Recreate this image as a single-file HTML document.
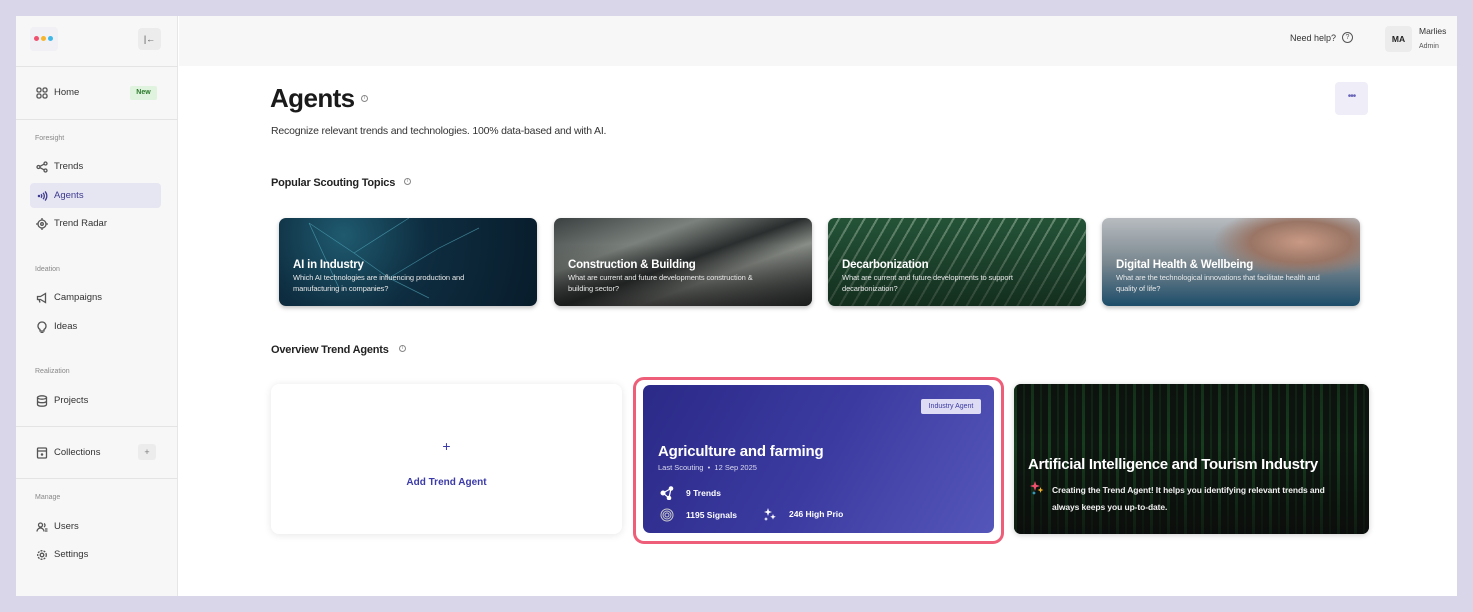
<!DOCTYPE html>
<html><head><meta charset="utf-8"><style>
*{box-sizing:border-box;margin:0;padding:0}
body{width:1473px;height:612px;background:#d9d6ea;font-family:"Liberation Sans",sans-serif;color:#222;position:relative;overflow:hidden}
.a{position:absolute}
.frame{left:16px;top:16px;width:1441px;height:580px;background:#fff;overflow:hidden}
.side{left:0;top:0;width:162px;height:580px;background:#f7f7f7;border-right:1px solid #e6e6e6}
.hr{position:absolute;left:0;width:162px;height:1px;background:#e4e4e4}
.nav{position:absolute;left:14px;width:131px;height:25px;font-size:9.5px;color:#333;display:flex;align-items:center;padding-left:6px;border-radius:4px}
.nav svg{width:12px;height:12px;margin-right:6px;stroke:#555;fill:none;stroke-width:1.3}
.sec{position:absolute;left:19px;font-size:7px;color:#888}
.top{left:163px;top:0;width:1278px;height:50px;background:#f7f7f7}
.info{position:absolute;width:7px;height:7px;border:1px solid #888;border-radius:50%;font-size:5px;line-height:5px;text-align:center;color:#888}
.card{position:absolute;top:202px;width:258px;height:88px;border-radius:7px;overflow:hidden;box-shadow:0 2px 4px rgba(0,0,0,.25);color:#fff}
.card h4{position:absolute;left:14px;top:41px;font-size:11.5px;font-weight:bold;letter-spacing:-.2px}
.card p{position:absolute;left:14px;top:55px;width:210px;font-size:7.5px;line-height:10.5px;color:#e8e8e8;letter-spacing:-.1px}
.st{font-size:8.5px;font-weight:bold;color:#fff;display:flex;align-items:center}
</style></head><body>
<div class="a frame">
 <div class="a side">
  <div class="a" style="left:14px;top:11px;width:28px;height:24px;background:#f0f0f5;border-radius:4px"></div>
  <div class="a" style="left:18px;top:20px;width:5px;height:5px;border-radius:50%;background:#f0506e"></div>
  <div class="a" style="left:25px;top:20px;width:5px;height:5px;border-radius:50%;background:#f7b52c"></div>
  <div class="a" style="left:32px;top:20px;width:5px;height:5px;border-radius:50%;background:#3fb8e8"></div>
  <div class="a" style="left:122px;top:12px;width:23px;height:22px;background:#ececec;border-radius:4px;font-size:9px;color:#555;text-align:center;line-height:22px">|←</div>
  <div class="hr" style="top:50px"></div>
  <div class="nav" style="top:64px"><svg viewBox="0 0 12 12"><rect x="1" y="1" width="4" height="4" rx="1.5"/><rect x="7" y="1" width="4" height="4" rx="1.5"/><rect x="1" y="7" width="4" height="4" rx="1.5"/><rect x="7" y="7" width="4" height="4" rx="1.5"/></svg>Home</div>
  <div class="a" style="left:114px;top:70px;width:27px;height:14px;background:#e0f3df;color:#2a7a2a;font-size:7px;font-weight:bold;text-align:center;line-height:14px;border-radius:2px">New</div>
  <div class="hr" style="top:103px"></div>
  <div class="sec" style="top:119px">Foresight</div>
  <div class="nav" style="top:138px"><svg viewBox="0 0 12 12"><circle cx="2.5" cy="6" r="1.5"/><circle cx="9.5" cy="2.5" r="1.5"/><circle cx="9.5" cy="9.5" r="1.5"/><path d="M4 5.3L8 3.2M4 6.7L8 8.8"/></svg>Trends</div>
  <div class="nav" style="top:167px;background:#e6e5f2;color:#3c3a8f"><svg viewBox="0 0 12 12" style="stroke:#3c3a8f"><circle cx="3" cy="6" r=".6"/><path d="M5 4.2a2.5 2.5 0 010 3.6M7 2.8a4.5 4.5 0 010 6.4M9 1.5a6.5 6.5 0 010 9"/></svg>Agents</div>
  <div class="nav" style="top:195px"><svg viewBox="0 0 12 12"><circle cx="6" cy="6" r="4"/><circle cx="6" cy="6" r="1.3"/><path d="M6 0v2M6 10v2M0 6h2M10 6h2"/></svg>Trend Radar</div>
  <div class="sec" style="top:250px">Ideation</div>
  <div class="nav" style="top:269px"><svg viewBox="0 0 12 12"><path d="M1.5 4.5h3l5-3v9l-5-3h-3z M3 7.5l1 3"/></svg>Campaigns</div>
  <div class="nav" style="top:298px"><svg viewBox="0 0 12 12"><path d="M4 8.5a4 4 0 114 0v1.5h-4z M4.5 11.5h3"/></svg>Ideas</div>
  <div class="sec" style="top:352px">Realization</div>
  <div class="nav" style="top:372px"><svg viewBox="0 0 12 12"><ellipse cx="6" cy="2.5" rx="4.5" ry="1.7"/><path d="M1.5 2.5v7c0 1 2 1.7 4.5 1.7s4.5-.7 4.5-1.7v-7M1.5 6c0 1 2 1.7 4.5 1.7S10.5 7 10.5 6"/></svg>Projects</div>
  <div class="hr" style="top:410px"></div>
  <div class="nav" style="top:424px"><svg viewBox="0 0 12 12"><rect x="1.5" y="1" width="9" height="10" rx="1"/><path d="M1.5 4h9"/><circle cx="6" cy="7.5" r=".6"/></svg>Collections</div>
  <div class="a" style="left:122px;top:428px;width:18px;height:16px;background:#ececec;border-radius:3px;font-size:9px;color:#777;text-align:center;line-height:16px">+</div>
  <div class="hr" style="top:462px"></div>
  <div class="sec" style="top:478px">Manage</div>
  <div class="nav" style="top:498px"><svg viewBox="0 0 12 12"><circle cx="4.5" cy="4" r="2"/><path d="M1 10.5a3.5 3.5 0 017 0M8 2.5a2 2 0 010 3.5M9 8h2.5M9 10h2.5"/></svg>Users</div>
  <div class="nav" style="top:526px"><svg viewBox="0 0 12 12"><circle cx="6" cy="6" r="1.8"/><circle cx="6" cy="6" r="4.3" stroke-dasharray="2 1.1"/></svg>Settings</div>
 </div>
 <div class="a top">
  <div class="a" style="left:1111px;top:17px;font-size:9px;color:#333">Need help?</div>
  <div class="a" style="left:1163px;top:16px;width:11px;height:11px;border:1px solid #555;border-radius:50%;font-size:7px;text-align:center;line-height:9px;color:#555">?</div>
  <div class="a" style="left:1206px;top:10px;width:27px;height:26px;background:#ececec;border-radius:4px;font-size:8.5px;font-weight:bold;text-align:center;line-height:26px">MA</div>
  <div class="a" style="left:1240px;top:10px;font-size:8.5px;color:#333">Marlies</div>
  <div class="a" style="left:1240px;top:27px;font-size:7px;color:#555">Admin</div>
 </div>
 <div class="a" style="left:254px;top:67px;font-size:26px;font-weight:bold;letter-spacing:-.6px;color:#1a1a1a">Agents</div>
 <div class="info" style="left:345px;top:79px">i</div>
 <div class="a" style="left:255px;top:109px;font-size:10.5px;letter-spacing:-.2px;color:#333">Recognize relevant trends and technologies. 100% data-based and with AI.</div>
 <div class="a" style="left:1319px;top:66px;width:33px;height:33px;background:#efeef8;border-radius:4px;text-align:center;line-height:30px;color:#6a65b8;font-size:10px;letter-spacing:-1px">•••</div>
 <div class="a" style="left:255px;top:161px;font-size:11px;font-weight:bold;letter-spacing:-.2px">Popular Scouting Topics</div>
 <div class="info" style="left:388px;top:162px">i</div>
 <div class="card" style="left:263px;background:radial-gradient(circle at 25% 20%,#1f5a6f 0,#0e2d40 40%,#081c2b 100%)">
  <svg class="a" width="258" height="88" style="left:0;top:0;opacity:.6"><path d="M30 5L75 35L130 0M75 35L110 60L160 30L200 10M30 5L60 70M110 60L150 80" stroke="#5ab6c9" stroke-width=".7" fill="none"/></svg>
  <h4>AI in Industry</h4><p>Which AI technologies are influencing production and manufacturing in companies?</p></div>
 <div class="card" style="left:538px;background:linear-gradient(160deg,#3a4040 0,#7b817c 30%,#2a2e2e 50%,#8a8e88 65%,#2d3131 100%)">
  <div class="a" style="left:0;top:0;width:258px;height:88px;background:linear-gradient(0deg,rgba(20,20,20,.7),rgba(0,0,0,0) 70%)"></div>
  <h4>Construction &amp; Building</h4><p>What are current and future developments construction &amp; building sector?</p></div>
 <div class="card" style="left:812px;background:repeating-linear-gradient(120deg,#2f6d4a 0 9px,#8fbb9c 9px 11px)">
  <div class="a" style="left:0;top:0;width:258px;height:88px;background:linear-gradient(0deg,rgba(10,25,15,.75),rgba(10,25,15,.3))"></div>
  <h4>Decarbonization</h4><p>What are current and future developments to support decarbonization?</p></div>
 <div class="card" style="left:1086px;background:linear-gradient(180deg,#b8bcc0 0,#7b8890 50%,#1d4d6a 100%)">
  <div class="a" style="left:110px;top:0;width:148px;height:60px;background:radial-gradient(ellipse at 60% 40%,#c99a85 0,#9a7565 40%,rgba(0,0,0,0) 70%)"></div>
  <h4>Digital Health &amp; Wellbeing</h4><p>What are the technological innovations that facilitate health and quality of life?</p></div>
 <div class="a" style="left:255px;top:328px;font-size:11px;font-weight:bold;letter-spacing:-.2px">Overview Trend Agents</div>
 <div class="info" style="left:383px;top:329px">i</div>
 <div class="a" style="left:255px;top:368px;width:351px;height:150px;background:#fff;border-radius:8px;box-shadow:0 1px 8px rgba(0,0,0,.1)">
  <div class="a" style="left:0;top:54px;width:351px;text-align:center;font-size:14px;color:#3b3aa8">+</div>
  <div class="a" style="left:0;top:93px;width:351px;text-align:center;font-size:10px;font-weight:bold;color:#3b3aa8">Add Trend Agent</div>
 </div>
 <div class="a" style="left:617px;top:361px;width:371px;height:167px;border:3px solid #ee5e79;border-radius:11px"></div>
 <div class="a" style="left:627px;top:369px;width:351px;height:148px;border-radius:7px;background:linear-gradient(120deg,#2b2a88 0,#3b3aa0 50%,#5556ba 100%);color:#fff">
  <div class="a" style="left:278px;top:14px;width:60px;height:15px;background:#dedcf5;color:#3b3aa0;font-size:7px;text-align:center;line-height:15px;border-radius:2px">Industry Agent</div>
  <div class="a" style="left:15px;top:58px;font-size:15px;font-weight:bold;letter-spacing:-.2px">Agriculture and farming</div>
  <div class="a" style="left:15px;top:78px;font-size:7.5px;color:#dcdcf0">Last Scouting &nbsp;• &nbsp;12 Sep 2025</div>
  <div class="a st" style="left:17px;top:101px"><svg width="14" height="14" viewBox="0 0 14 14" fill="#fff" stroke="#fff"><circle cx="3" cy="7" r="2"/><circle cx="11" cy="2.5" r="1.8"/><circle cx="9" cy="12" r="1.8"/><path d="M3 7L11 2.5M3 7L9 12M11 2.5L9 12" stroke-width="1.2"/></svg><span style="margin-left:12px">9 Trends</span></div>
  <div class="a st" style="left:17px;top:123px"><svg width="14" height="14" viewBox="0 0 14 14" fill="none" stroke="#ccc" stroke-width="1"><circle cx="7" cy="7" r="6"/><circle cx="7" cy="7" r="4"/><circle cx="7" cy="7" r="2"/></svg><span style="margin-left:12px">1195 Signals</span></div>
  <div class="a st" style="left:120px;top:122px"><svg width="14" height="14" viewBox="0 0 14 14" fill="#fff"><path d="M5 1L6 4L9 5L6 6L5 9L4 6L1 5L4 4z M10 7l.8 2 2 .8-2 .8-.8 2-.8-2-2-.8 2-.8z M3 10l.6 1.4 1.4.6-1.4.6L3 14l-.6-1.4L1 12l1.4-.6z"/></svg><span style="margin-left:12px">246 High Prio</span></div>
 </div>
 <div class="a" style="left:998px;top:368px;width:355px;height:150px;border-radius:7px;overflow:hidden;background:#0f1a12;box-shadow:0 1px 6px rgba(0,0,0,.2)">
  <div class="a" style="left:0;top:0;width:355px;height:150px;background:repeating-linear-gradient(90deg,rgba(40,140,60,.5) 0 3px,rgba(0,0,0,0) 3px 9px,rgba(30,110,45,.35) 9px 11px,rgba(0,0,0,0) 11px 17px)"></div>
  <div class="a" style="left:0;top:0;width:355px;height:150px;background:linear-gradient(0deg,rgba(10,10,10,.75) 0,rgba(10,10,10,.3) 60%,rgba(10,10,10,.5) 100%)"></div>
  <div class="a" style="left:14px;top:72px;font-size:15px;font-weight:bold;color:#fff;letter-spacing:-.3px">Artificial Intelligence and Tourism Industry</div>
  <svg class="a" style="left:16px;top:97px" width="14" height="14" viewBox="0 0 14 14"><path d="M5 0L6.2 3.8L10 5L6.2 6.2L5 10L3.8 6.2L0 5L3.8 3.8z" fill="#f0506e"/><path d="M10.5 6l.8 2.2 2.2.8-2.2.8-.8 2.2-.8-2.2-2.2-.8 2.2-.8z" fill="#f7b52c"/><path d="M4 10l.6 1.4 1.4.6-1.4.6L4 14l-.6-1.4L2 12l1.4-.6z" fill="#3fb8e8"/></svg>
  <div class="a" style="left:38px;top:98px;width:300px;font-size:8.5px;line-height:17px;font-weight:bold;color:#f0f0f0;letter-spacing:-.1px">Creating the Trend Agent! It helps you identifying relevant trends and always keeps you up-to-date.</div>
 </div>
</div>
</body></html>
